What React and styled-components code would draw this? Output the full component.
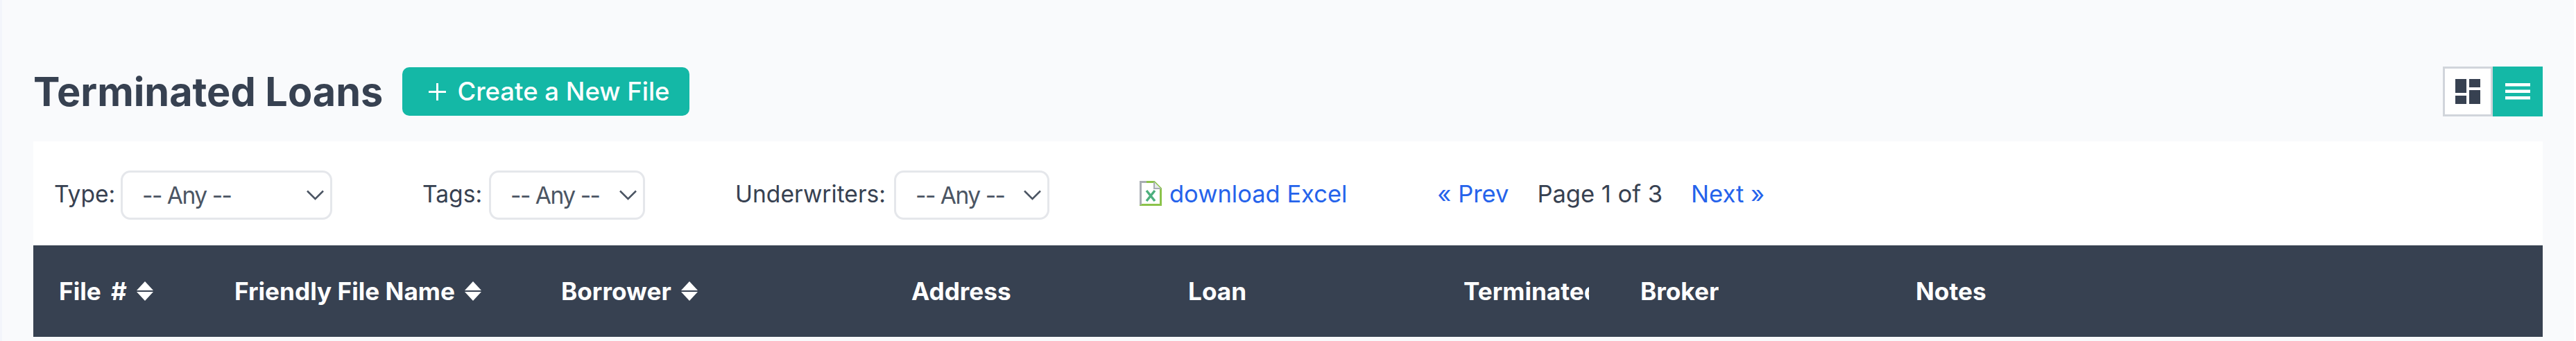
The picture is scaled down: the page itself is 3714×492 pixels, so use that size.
import React from "react";
import styled, { createGlobalStyle } from "styled-components";

const COLUMNS = [
  { title: "File #", sortable: true, wordGap: 6 },
  { title: "Friendly File Name", sortable: true },
  { title: "Borrower", sortable: true },
  { title: "Address" },
  { title: "Loan" },
  { title: "Terminated" },
  { title: "Broker" },
  { title: "Notes" },
];

const FILTERS = [
  { label: "Type:", labelWidth: 85, width: 305 },
  { label: "Tags:", labelWidth: 85, width: 225 },
  { label: "Underwriters:", labelWidth: 218, width: 224 },
];

const GlobalStyle = createGlobalStyle`
  html, body {
    margin: 0;
    background: #fff;
  }
  body {
    font-family: Inter, "Liberation Sans", sans-serif;
    color: #374151;
  }
`;

const Page = styled.div`
  width: 3711px;
  height: 492px;
  box-sizing: border-box;
  padding: 96px 45px 0 45px;
  border-left: 3px solid #f3f5fb;
  background: #f9fafc;
  overflow: hidden;
`;

const TitleBar = styled.div`
  display: flex;
  align-items: center;
  height: 72px;
  margin-bottom: 36px;
`;

const Title = styled.h1`
  margin: 0 28px 0 0;
  font-size: 57.6px;
  line-height: 72px;
  font-weight: 700;
  color: #374151;
  white-space: nowrap;
`;

const CreateButton = styled.button`
  display: flex;
  align-items: center;
  gap: 16px;
  width: 414px;
  height: 70px;
  padding: 0 0 0 38px;
  border: 0;
  border-radius: 10px;
  background: #14b8a6;
  color: #fff;
  font: 500 36.5px Inter, sans-serif;
  white-space: nowrap;
`;

const ViewToggle = styled.div`
  display: flex;
  margin-left: auto;
`;

const ViewButton = styled.div`
  display: flex;
  align-items: center;
  justify-content: center;
  width: 72px;
  height: 72px;
  box-sizing: border-box;
  background: ${(p) => (p.$active ? "#14b8a6" : "#fff")};
  border: ${(p) => (p.$active ? "0" : "3px solid #d1d5db")};
`;

const Panel = styled.div`
  background: #fff;
`;

const FilterBar = styled.div`
  display: flex;
  align-items: center;
  gap: 130px;
  height: 150px;
  box-sizing: border-box;
  padding-left: 30px;
  font-size: 34.5px;
`;

const Filter = styled.label`
  display: flex;
  align-items: center;
  gap: 11px;
  white-space: nowrap;
`;

const FilterLabel = styled.span`
  width: ${(p) => p.$width}px;
  font-size: 33.6px;
`;

const Select = styled.div`
  display: flex;
  align-items: center;
  justify-content: space-between;
  width: ${(p) => p.$width}px;
  height: 71px;
  margin-top: 5px;
  box-sizing: border-box;
  padding: 0 9px 0 28px;
  border: 3px solid #e5e7eb;
  border-radius: 14px;
  background: #fff;
  color: #4b5563;
  font-size: 33.6px;
  letter-spacing: -1.5px;
`;

const Link = styled.a`
  color: #2563eb;
  text-decoration: none;
  white-space: nowrap;
`;

const ExcelLink = styled(Link)`
  display: flex;
  align-items: center;
  gap: 11px;
`;

const Pager = styled.div`
  display: flex;
  align-items: center;
  gap: 41px;
  white-space: nowrap;
`;

const HeaderRow = styled.div`
  display: grid;
  grid-template-columns: 253px 471px 505px 399px 397px 255px 397px 1fr;
  align-items: center;
  height: 132px;
  background: #374151;
  color: #fff;
  font-size: 35.2px;
  font-weight: 700;
`;

const HeaderCell = styled.div`
  display: flex;
  align-items: center;
  gap: 14px;
  padding: 0 37px;
  min-width: 0;
`;

const HeaderText = styled.span`
  overflow: hidden;
  white-space: nowrap;
  word-spacing: ${(p) => p.$wordGap || 0}px;
`;

const SortIcon = () => (
  <svg width="24" height="28" viewBox="0 0 24 28" style={{ flex: "none" }}>
    <path d="M12 0 L24 13 H0 Z M0 15 H24 L12 28 Z" fill="#fff" />
  </svg>
);

const Chevron = () => (
  <svg width="25" height="15" viewBox="0 0 25 15" fill="none">
    <path d="M1 1.5 L12.5 13 L24 1.5" stroke="#4b5563" strokeWidth="2.5" />
  </svg>
);

const PlusIcon = () => (
  <svg width="25" height="25" viewBox="0 0 25 25">
    <path d="M12.5 0 V25 M0 12.5 H25" stroke="#fff" strokeWidth="3" />
  </svg>
);

const GridIcon = () => (
  <svg width="36" height="36" viewBox="0 0 36 36" fill="#374151">
    <rect x="0" y="0" width="16" height="20" />
    <rect x="20" y="0" width="16" height="12" />
    <rect x="0" y="24" width="16" height="12" />
    <rect x="20" y="16" width="16" height="20" />
  </svg>
);

const ListIcon = () => (
  <svg width="36" height="24" viewBox="0 0 36 24" fill="#fff">
    <rect y="0" width="36" height="4.5" />
    <rect y="9.5" width="36" height="4.5" />
    <rect y="19" width="36" height="4.5" />
  </svg>
);

const ExcelIcon = () => (
  <svg width="32" height="36" viewBox="0 0 32 36" fill="none">
    <path d="M1.5 1.5 H21 L30.5 11 V34.5 H1.5 Z" fill="#fff" stroke="#8bc34a" strokeWidth="3" />
    <path d="M1.5 34.5 V1.5 H10" stroke="#a8adb3" strokeWidth="3" />
    <path d="M21 1.5 V11 H30.5" fill="#e5e7eb" stroke="#a8adb3" strokeWidth="2" />
    <path d="M10 14 L22 29 M22 14 L10 29" stroke="#4caf7d" strokeWidth="3.5" />
  </svg>
);

export default function App() {
  return (
    <>
      <GlobalStyle />
      <Page>
        <TitleBar>
          <Title>Terminated Loans</Title>
          <CreateButton>
            <PlusIcon />
            Create a New File
          </CreateButton>
          <ViewToggle>
            <ViewButton>
              <GridIcon />
            </ViewButton>
            <ViewButton $active>
              <ListIcon />
            </ViewButton>
          </ViewToggle>
        </TitleBar>
        <Panel>
          <FilterBar>
            {FILTERS.map((f) => (
              <Filter key={f.label}>
                <FilterLabel $width={f.labelWidth}>{f.label}</FilterLabel>
                <Select $width={f.width}>
                  -- Any --
                  <Chevron />
                </Select>
              </Filter>
            ))}
            <ExcelLink href="#">
              <ExcelIcon />
              download Excel
            </ExcelLink>
            <Pager>
              <Link href="#">« Prev</Link>
              <span>Page 1 of 3</span>
              <Link href="#">Next »</Link>
            </Pager>
          </FilterBar>
          <HeaderRow>
            {COLUMNS.map((c) => (
              <HeaderCell key={c.title}>
                <HeaderText $wordGap={c.wordGap}>{c.title}</HeaderText>
                {c.sortable && <SortIcon />}
              </HeaderCell>
            ))}
          </HeaderRow>
        </Panel>
      </Page>
    </>
  );
}
